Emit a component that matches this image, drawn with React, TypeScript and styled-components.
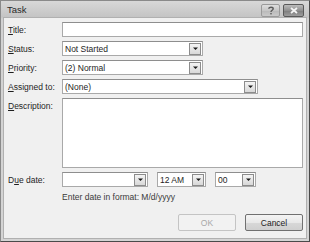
import React from "react";
import styled, { createGlobalStyle } from "styled-components";

const Global = createGlobalStyle`
  html, body { margin: 0; padding: 0; background: #ffffff; }
  * { box-sizing: border-box; }
`;

const Window = styled.div`
  width: 310px;
  height: 242px;
  display: flex;
  flex-direction: column;
  border: 1px solid #4a4a4a;
  border-top-color: #8a8a8a;
  border-left-color: #8a8a8a;
  background: linear-gradient(#d8d8d8, #c4c4c4 16px, #d2d2d2 18px, #d4d4d4);
  font-family: "Liberation Sans", Arial, sans-serif;
  font-size: 8.5px;
  color: #1e1e1e;
  padding: 0 2px 2px 2px;
  overflow: hidden;
`;

const TitleBar = styled.div`
  height: 16px;
  display: flex;
  align-items: center;
  padding: 0 3px 0 4px;
  flex: none;
`;

const TitleText = styled.div`
  flex: 1;
  font-size: 9.5px;
  color: #2a2a2a;
`;

const CaptionButton = styled.div<{ $close?: boolean }>`
  width: ${(p) => (p.$close ? 21 : 19)}px;
  height: 13px;
  margin-left: ${(p) => (p.$close ? 3 : 0)}px;
  margin-top: 2px;
  border: 1px solid ${(p) => (p.$close ? "#5a5a5a" : "#9a9a9a")};
  border-radius: 2px;
  background: ${(p) =>
    p.$close
      ? "linear-gradient(#bcbcbc, #909090 50%, #7c7c7c 51%, #9c9c9c)"
      : "linear-gradient(#dedede, #c6c6c6 50%, #b8b8b8 51%, #cacaca)"};
  display: flex;
  align-items: center;
  justify-content: center;
`;

const Client = styled.div`
  flex: 1;
  background: #f0f0f0;
  border: 1px solid #b0b0b0;
  padding: 4px 3px 0 4px;
  display: flex;
  flex-direction: column;
`;

const FormGrid = styled.div`
  display: grid;
  grid-template-columns: 54px 1fr;
  row-gap: 4px;
  align-items: center;
`;

const Label = styled.div<{ $top?: boolean }>`
  align-self: ${(p) => (p.$top ? "start" : "center")};
  padding-top: ${(p) => (p.$top ? 3 : 0)}px;
  white-space: nowrap;
  & u { text-decoration: underline; text-underline-offset: 1px; }
`;

const TextBox = styled.div<{ $w?: number; $h?: number }>`
  width: ${(p) => (p.$w ? `${p.$w}px` : "100%")};
  height: ${(p) => p.$h ?? 15}px;
  background: #ffffff;
  border: 1px solid #a9a9a9;
  border-top-color: #8e8e8e;
  display: flex;
  align-items: center;
  padding: 0 1px 0 2px;
`;

const BoxText = styled.div`
  flex: 1;
  white-space: nowrap;
`;

const DropButton = styled.div`
  width: 12px;
  height: 12px;
  border: 1px solid #8c8c8c;
  background: linear-gradient(#f4f4f4, #d8d8d8);
  display: flex;
  align-items: center;
  justify-content: center;
  flex: none;
`;

const DueRow = styled.div`
  display: flex;
  align-items: center;
  gap: 9px;
`;

const Hint = styled.div`
  grid-column: 2;
  color: #3a3a3a;
  margin-top: 1px;
`;

const Footer = styled.div`
  margin-top: auto;
  display: flex;
  justify-content: flex-end;
  gap: 9px;
  padding: 0 0 7px 0;
`;

const Button = styled.div<{ $disabled?: boolean }>`
  width: 58px;
  height: 17px;
  border-radius: 2px;
  border: 1px solid ${(p) => (p.$disabled ? "#c4c4c4" : "#707070")};
  background: ${(p) =>
    p.$disabled
      ? "#f2f2f2"
      : "linear-gradient(#f4f4f4, #e8e8e8 50%, #d8d8d8 51%, #cfcfcf)"};
  color: ${(p) => (p.$disabled ? "#a8a8a8" : "#1e1e1e")};
  display: flex;
  align-items: center;
  justify-content: center;
`;

const Arrow = () => (
  <svg width="7" height="5" viewBox="0 0 7 5">
    <path d="M1 1.5 H6 L3.5 4 Z" fill="#1a1a1a" />
  </svg>
);

const Combo = ({ text, w, h }: { text: string; w: number; h?: number }) => (
  <TextBox $w={w} $h={h}>
    <BoxText>{text}</BoxText>
    <DropButton>
      <Arrow />
    </DropButton>
  </TextBox>
);

export default function App() {
  return (
    <>
      <Global />
      <Window>
        <TitleBar>
          <TitleText>Task</TitleText>
          <CaptionButton>
            <svg width="8" height="9" viewBox="0 0 8 9">
              <path
                d="M1.8 2.8 C1.8 0.8 6.2 0.8 6.2 2.8 C6.2 4.4 4 4.2 4 6"
                stroke="#5a5a5a"
                strokeWidth="1.4"
                fill="none"
              />
              <rect x="3.3" y="7" width="1.4" height="1.4" fill="#5a5a5a" />
            </svg>
          </CaptionButton>
          <CaptionButton $close>
            <svg width="8" height="7" viewBox="0 0 8 7">
              <path d="M1 1 L7 6 M7 1 L1 6" stroke="#f4f4f4" strokeWidth="1.8" />
            </svg>
          </CaptionButton>
        </TitleBar>
        <Client>
          <FormGrid>
            <Label>
              <u>T</u>itle:
            </Label>
            <TextBox />
            <Label>
              <u>S</u>tatus:
            </Label>
            <Combo text="Not Started" w={141} />
            <Label>
              <u>P</u>riority:
            </Label>
            <Combo text="(2) Normal" w={141} />
            <Label>
              <u>A</u>ssigned to:
            </Label>
            <Combo text="(None)" w={196} />
            <Label $top>
              <u>D</u>escription:
            </Label>
            <TextBox $h={70} />
            <Label>
              D<u>u</u>e date:
            </Label>
            <DueRow>
              <Combo text="" w={86} />
              <Combo text="12 AM" w={49} />
              <Combo text="00" w={41} />
            </DueRow>
            <Hint>Enter date in format: M/d/yyyy</Hint>
          </FormGrid>
          <Footer>
            <Button $disabled>OK</Button>
            <Button>Cancel</Button>
          </Footer>
        </Client>
      </Window>
    </>
  );
}
